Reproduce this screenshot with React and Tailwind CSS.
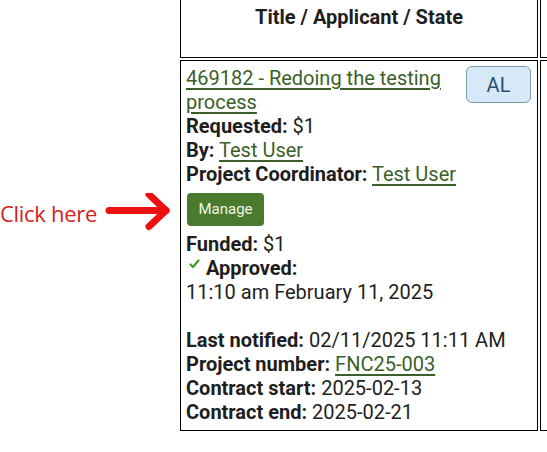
import React from "react";

function Arrow() {
  return (
    <svg width="70" height="40" viewBox="0 0 70 40" className="block">
      <g stroke="#ee1111" strokeWidth="7" strokeLinecap="round" strokeLinejoin="round" fill="none">
        <line x1="5" y1="17.5" x2="62" y2="17.5" />
        <polyline points="45,1.5 62,17.5 45,33.5" />
      </g>
    </svg>
  );
}

function Check() {
  return (
    <svg width="11" height="10" viewBox="0 0 11 10" className="inline-block align-baseline ml-[3px] mr-[6px] mb-[6px]">
      <polyline points="1.5,5.5 4,8 9.5,1.5" fill="none" stroke="#3a9a2a" strokeWidth="2.2" strokeLinecap="round" strokeLinejoin="round" />
    </svg>
  );
}

const linkCls = "text-[#3b5f2a] underline underline-offset-[3px] decoration-[1.5px]";

export default function App() {
  return (
    <div className="w-[547px] h-[452px] overflow-hidden bg-white flex font-['Roboto',sans-serif] text-[#1e1e1e]">
      <div className="w-[180px] shrink-0 pt-[193px]">
        <div className="flex items-center">
          <span className="font-['Open_Sans',sans-serif] text-[22px] leading-[40px] text-[#d42020] w-[104px] shrink-0 tracking-[-0.3px]">
            Click here
          </span>
          <Arrow />
        </div>
      </div>
      <div className="grid grid-cols-[358px_100px] grid-rows-[58px_auto] gap-[2px] content-start">
        <div className="border-x border-b border-black text-center font-bold text-[20px] leading-[24px] pt-[5px]">
          Title / Applicant / State
        </div>
        <div className="border-x border-b border-black"></div>
        <div className="border border-black px-[5px] pt-[5px] pb-[6px] text-[20px] leading-[24px]">
          <div className="flex items-start justify-between">
            <a href="#" className={linkCls + " w-[270px]"}>
              469182 - Redoing the testing process
            </a>
            <div className="w-[65px] h-[37px] rounded-[6px] border border-[#7d97ae] bg-[#d6e9f7] text-[#2c4f72] flex items-center justify-center text-[20px] mr-px">
              AL
            </div>
          </div>
          <div>
            <b>Requested:</b> $1
          </div>
          <div>
            <b>By:</b> <a href="#" className={linkCls}>Test User</a>
          </div>
          <div>
            <b>Project Coordinator:</b> <a href="#" className={linkCls}>Test User</a>
          </div>
          <div className="pt-[7px] pb-[6px]">
            <button className="h-[33px] w-[77px] rounded-[4px] bg-[#4a7a2d] text-[#eef5e8] text-[15px] leading-[33px] ml-px">
              Manage
            </button>
          </div>
          <div>
            <b>Funded:</b> $1
          </div>
          <div>
            <Check />
            <b>Approved:</b>
          </div>
          <div>11:10 am February 11, 2025</div>
          <div className="h-[24px]"></div>
          <div>
            <b>Last notified:</b> 02/11/2025 11:11 AM
          </div>
          <div>
            <b>Project number:</b> <a href="#" className={linkCls}>FNC25-003</a>
          </div>
          <div>
            <b>Contract start:</b> 2025-02-13
          </div>
          <div>
            <b>Contract end:</b> 2025-02-21
          </div>
        </div>
        <div className="border border-black"></div>
      </div>
    </div>
  );
}
